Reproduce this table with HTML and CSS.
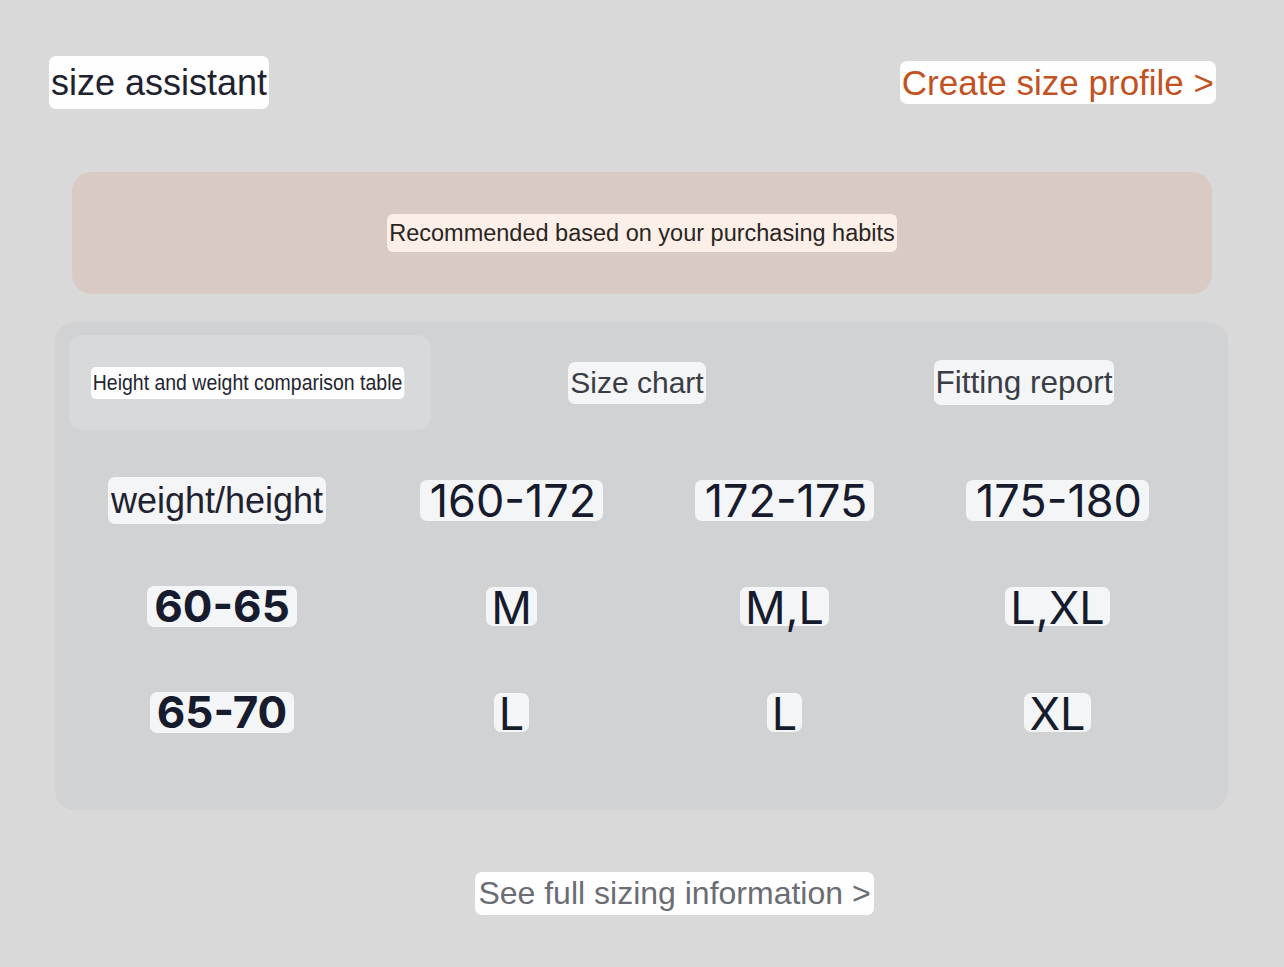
FILE: index.html
```html
<!DOCTYPE html>
<html lang="en">
<head>
<meta charset="utf-8">
<title>size assistant</title>
<link rel="stylesheet" href="styles.css">
</head>
<body>
<div class="page">
  <header class="header">
    <h1 class="title"><span class="chip chip-white">size assistant</span></h1>
    <a class="profile-link chip chip-white" href="#">Create size profile &gt;</a>
  </header>

  <section class="banner">
    <span class="chip chip-peach banner-text">Recommended based on your purchasing habits</span>
  </section>

  <section class="panel">
    <div class="tabs">
      <div class="tab tab-active"><span class="chip chip-white tab-small">Height and weight comparison table</span></div>
      <div class="tab"><span class="chip chip-soft tab-label">Size chart</span></div>
      <div class="tab"><span class="chip chip-soft tab-label tab-label-wide">Fitting report</span></div>
    </div>

    <div class="table">
      <div class="cell"><span class="chip chip-soft head-label">weight/height</span></div>
      <div class="cell"><span class="chip chip-soft num">160-172</span></div>
      <div class="cell"><span class="chip chip-soft num">172-175</span></div>
      <div class="cell"><span class="chip chip-soft num">175-180</span></div>

      <div class="cell"><span class="chip chip-soft num bold">60-65</span></div>
      <div class="cell"><span class="chip chip-soft size">M</span></div>
      <div class="cell"><span class="chip chip-soft size">M,L</span></div>
      <div class="cell"><span class="chip chip-soft size">L,XL</span></div>

      <div class="cell"><span class="chip chip-soft num bold">65-70</span></div>
      <div class="cell"><span class="chip chip-soft size">L</span></div>
      <div class="cell"><span class="chip chip-soft size">L</span></div>
      <div class="cell"><span class="chip chip-soft size">XL</span></div>
    </div>
  </section>

  <footer class="footer">
    <a class="chip chip-white full-link" href="#">See full sizing information &gt;</a>
  </footer>
</div>
</body>
</html>
```

FILE: styles.css
```css
* { box-sizing: border-box; }

html, body {
  margin: 0;
  padding: 0;
}

body {
  background: #d9d9d9;
  font-family: "Liberation Sans", Arial, sans-serif;
  color: #1f2230;
  width: 1284px;
  height: 967px;
  overflow: hidden;
}

.page {
  padding-top: 56px;
}

.chip {
  display: inline-block;
  border-radius: 7px;
  padding: 0 3px;
  text-decoration: none;
  white-space: nowrap;
}

.chip-white { background: #fefefe; }
.chip-soft { background: #f4f5f7; }
.chip-peach { background: #fcefe8; }

/* Header */
.header {
  display: flex;
  justify-content: space-between;
  align-items: center;
  padding: 0 68px 0 49px;
  height: 53px;
}

.title {
  margin: 0;
  font-weight: 400;
  font-size: 36px;
  line-height: 53px;
  color: #1f2230;
}

.title .chip { padding: 0 2px; line-height: 53px; }

.profile-link {
  font-size: 35px;
  line-height: 43px;
  color: #c2521f;
  padding: 0 2px;
}

/* Banner */
.banner {
  margin: 63px 72px 0 72px;
  height: 122px;
  background: #d9cac3;
  border-radius: 20px;
  display: flex;
  align-items: center;
  justify-content: center;
}

.banner-text {
  font-size: 23.5px;
  line-height: 38px;
  color: #2a2522;
  padding: 0 2px;
  border-radius: 6px;
}

/* Panel */
.panel {
  margin: 28px 56px 0 55px;
  padding: 13px 23px 45px 14px;
  background: #d1d2d4;
  border-radius: 20px;
  height: 488px;
}

.tabs {
  display: grid;
  grid-template-columns: repeat(3, 362px);
  column-gap: 25px;
}

.tab {
  height: 95px;
  display: flex;
  align-items: center;
  justify-content: center;
  border-radius: 14px;
}

.tab-active {
  background: #d8d9db;
  justify-content: flex-start;
  padding-left: 22px;
}

.tab-small {
  font-size: 22px;
  line-height: 32px;
  color: #232532;
  padding: 0 2px;
  border-radius: 5px;
  transform: scaleX(0.885);
  transform-origin: left center;
}

.tab-label {
  font-size: 30px;
  line-height: 42px;
  color: #3a3d45;
  padding: 0 2px;
}

.tab-label-wide {
  font-size: 31.5px;
  line-height: 45px;
}

/* Table */
.table {
  margin-top: 17px;
  display: grid;
  grid-template-columns: 306px repeat(3, 273px);
  grid-auto-rows: 106px;
}

.cell {
  display: flex;
  align-items: center;
  justify-content: center;
}

.head-label {
  font-size: 36px;
  line-height: 47px;
  color: #1f2230;
  padding: 0 3px;
  margin-right: 10px;
}

.num {
  font-family: Inter, "Liberation Sans", sans-serif;
  font-size: 45px;
  line-height: 41px;
  color: #161b2e;
  padding: 0 7px 0 10px;
}

.num.bold {
  font-weight: 700;
  font-size: 44px;
  padding: 0 7px;
}

.size {
  font-family: Inter, "Liberation Sans", sans-serif;
  font-size: 45px;
  line-height: 36px;
  padding-top: 3px;
  color: #161b2e;
  padding-left: 5px;
  padding-right: 5px;
}

/* Footer */
.footer {
  margin-top: 62px;
  display: flex;
  justify-content: center;
  padding-left: 65px;
}

.full-link {
  font-size: 32px;
  line-height: 43px;
  color: #6b6d75;
  padding: 0 3px;
}
```
